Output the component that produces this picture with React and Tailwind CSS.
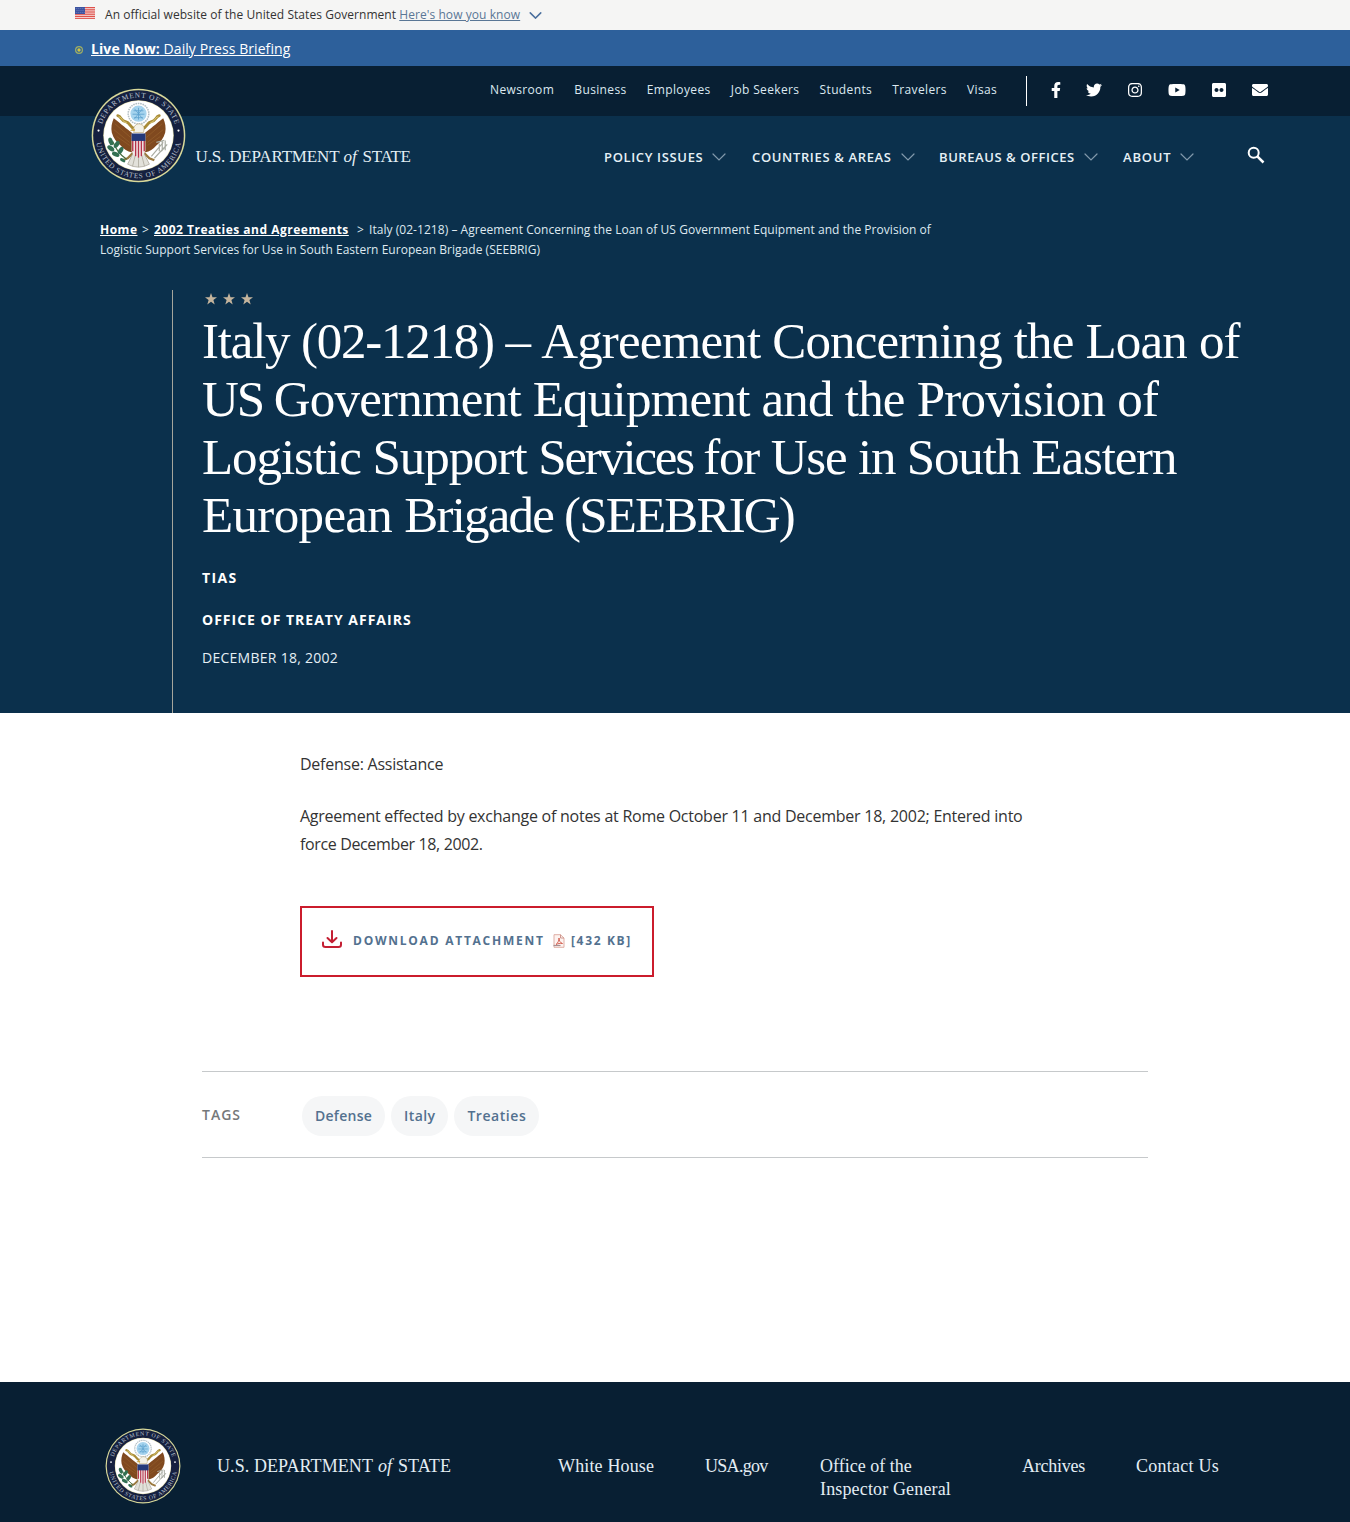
import React, { useId } from "react";
import { FaFacebookF, FaTwitter, FaInstagram, FaYoutube, FaFlickr, FaEnvelope } from "react-icons/fa";

const serif = "font-['Liberation_Serif',serif]";

function Seal({ className }) {
  const id = useId();
  return (
    <svg viewBox="0 0 96 96" className={className} aria-label="Department of State seal">
      <defs>
        <path id={id + "t"} d="M9.5 48a38.5 38.5 0 0 1 77 0" />
        <path id={id + "b"} d="M4.8 48a43.2 43.2 0 0 0 86.4 0" />
      </defs>
      <circle cx="48" cy="48" r="47.3" fill="#d9d99a" />
      <circle cx="48" cy="48" r="45.8" fill="#15203f" />
      <circle cx="48" cy="48" r="35.6" fill="#e5dfae" />
      <circle cx="48" cy="48" r="35" fill="#fff" />
      <g fill="#b9c1d0" fontFamily="Liberation Serif" fontWeight="400" fontSize="7.4">
        <text textAnchor="middle" textLength="98" lengthAdjust="spacing">
          <textPath href={"#" + id + "t"} startOffset="50%">DEPARTMENT OF STATE</textPath>
        </text>
        <text textAnchor="middle" textLength="120" lengthAdjust="spacing">
          <textPath href={"#" + id + "b"} startOffset="50%">UNITED STATES OF AMERICA</textPath>
        </text>
      </g>
      <circle cx="7.6" cy="43" r="1.1" fill="#fff" />
      <circle cx="88.4" cy="43" r="1.1" fill="#fff" />
      <circle cx="48" cy="26" r="10.4" fill="none" stroke="#b4bfc4" strokeWidth="1.6" strokeDasharray="1.6 .8" />
      <circle cx="48" cy="26" r="8.2" fill="#a6d4ee" />
      <path d="M43 23h10M42 26.500h12M43.500 30h9M48 20v12M44 21l8 10M52 21l-8 10" stroke="#5aa0cd" strokeWidth=".8" />
      <path d="M41 45C37 42 30 36 23 30.500C21 35 20 40 21 45C22.500 51 26 55 30 58C33 62 37 64 41 65L44 58V48Z" fill="#80491f" />
      <path d="M55 45C59 42 66 36 73 30.500C75 35 76 40 75 45C73.500 51 70 55 66 58C63 62 59 64 55 65L52 58V48Z" fill="#80491f" />
      <path d="M24 36l16 14M23 42l16 13M26 49l13 9M72 36l-16 14M73 42l-16 13M70 49l-13 9" stroke="#95602c" strokeWidth=".7" />
      <path d="M27 28c4 1 3 5 8 6s4 6 9 7M69 28c-4 1-3 5-8 6s-4 6-9 7" fill="none" stroke="#a98c38" strokeWidth="2.8" strokeLinecap="round" />
      <path d="M28 29c4 1 3 5 8 6M68 29c-4 1-3 5-8 6" fill="none" stroke="#e3d27c" strokeWidth=".9" />
      <path d="M43 41c1-4 5-6 8-4 3 1 3 4 2 8H43l1-3-4 1z" fill="#f4f2e8" stroke="#a68a4c" strokeWidth=".5" />
      <path d="M40.500 43l3.500-2v2.500z" fill="#d5a42b" />
      <path d="M43 65l-6 6-5 2M53 65l6 6 5 2" stroke="#9c7a3f" strokeWidth="2.400" fill="none" />
      <path d="M43 65h10l6 12q-11 6-22 0z" fill="#e2e1da" stroke="#a39f93" strokeWidth=".7" />
      <path d="M45 67l-3 12M48 67v13M51 67l3 12" stroke="#a39f93" strokeWidth=".7" />
      <path d="M41 46h14v17q-1 5-7 8q-6-3-7-8z" fill="#f3ecec" />
      <path d="M42.200 52v12M45.100 52v17M48 52v18.500M50.900 52v17M53.800 52v12" stroke="#b5334a" strokeWidth="1.4" />
      <path d="M41 46h14v7.500H41z" fill="#24397a" />
      <path d="M36 72C30 68 25 62 22 54" stroke="#476b3c" fill="none" strokeWidth="1.2" />
      <g fill="#337052">
        <ellipse cx="20" cy="54" rx="2.200" ry="4" transform="rotate(-20 20 54)" />
        <ellipse cx="26" cy="57" rx="2.200" ry="4" transform="rotate(35 26 57)" />
        <ellipse cx="20" cy="61" rx="2.200" ry="4" transform="rotate(-55 20 61)" />
        <ellipse cx="30" cy="63" rx="2.200" ry="4" transform="rotate(30 30 63)" />
        <ellipse cx="25" cy="67" rx="2.200" ry="4" transform="rotate(-65 25 67)" />
        <ellipse cx="32" cy="73" rx="1.600" ry="3" transform="rotate(-60 32 73)" />
      </g>
      <path d="M61 69l12-14M64 71l12-13M66 55l8-2M71 64l6-7M75 53v10M72 54v9M69 56v8" stroke="#a9aca3" strokeWidth="1.2" fill="none" />
    </svg>
  );
}

function Flag() {
  return (
    <svg viewBox="0 0 20 12" className="h-3 w-5 shrink-0">
      <path fill="#f7dfdc" d="M0 0h20v12H0z" />
      <path stroke="#dc4a43" strokeWidth=".95" d="M0 .5h20M0 2.300h20M0 4.100h20M0 5.900h20M0 7.700h20M0 9.500h20M0 11.400h20" />
      <path fill="#3c53a0" d="M0 0h10v7H0z" />
      <path stroke="#8b9bce" strokeWidth=".7" strokeDasharray=".8 1.200" d="M.8 1.500h9M1.600 3.500h8M.8 5.500h9" />
    </svg>
  );
}

function Chevron({ className, width = 1.2 }) {
  return (
    <svg viewBox="0 0 14 8" fill="none" stroke="currentColor" strokeWidth={width} strokeLinecap="round" className={className}>
      <path d="M1 1l6 6 6-6" />
    </svg>
  );
}

const utility = ["Newsroom", "Business", "Employees", "Job Seekers", "Students", "Travelers", "Visas"];
const menus = [
  ["POLICY ISSUES", "w-[148px]"],
  ["COUNTRIES & AREAS", "w-[187px]"],
  ["BUREAUS & OFFICES", "w-[184px] tracking-[0.56px]"],
  ["ABOUT", "w-[72px] tracking-[0.8px]"],
];
const headline = [
  [["Italy (02-1218) – ", "tracking-[-1.22px]"], ["Agreement Concerning the Loan of", "tracking-[-0.83px]"]],
  [["US ", "tracking-[-2.1px]"], ["Government Equipment and the Provision of", "tracking-[-0.78px]"]],
  [["Logistic Support ", "tracking-[-1.05px]"], ["Services ", "tracking-[-2.3px]"], ["for Use in South Eastern", "tracking-[-1.18px]"]],
  [["European ", "tracking-[-0.65px]"], ["Brigade ", "tracking-[-1.8px]"], ["(SEEBRIG)", "tracking-[-1.85px]"]],
];

function Social() {
  return (
    <div className="flex items-center text-white">
      <span className="flex w-[29px] justify-center"><FaFacebookF className="size-4" /></span>
      <span className="flex w-12 justify-center"><FaTwitter className="size-4" /></span>
      <span className="flex w-[34px] justify-center"><FaInstagram className="size-4" /></span>
      <span className="flex w-[50px] justify-center"><FaYoutube className="h-4 w-[18px]" /></span>
      <span className="flex w-[34px] justify-center"><FaFlickr className="size-4" /></span>
      <span className="flex w-12 justify-center"><FaEnvelope className="size-4" /></span>
    </div>
  );
}

function Header() {
  return (
    <header className="bg-[#0b304c]">
      <div className="flex h-[50px] items-start bg-[#081f33] pl-[490px]">
        <nav className="flex gap-[20.200px] pt-[14px] text-xs leading-5 tracking-[0.36px] text-[#dce8f0]">
          {utility.map((t) => <a key={t}>{t}</a>)}
        </nav>
        <div className="mt-2.5 mr-[14px] ml-[29.300px] h-[30px] w-px bg-white" />
        <div className="pt-4"><Social /></div>
      </div>
      <div className="flex h-[104px] items-start">
        <Seal className="-mt-[28.500px] ml-[90.500px] size-[95px] shrink-0" />
        <div className={`${serif} mt-[29px] ml-[10px] flex w-[408px] text-[17px] leading-6 whitespace-nowrap text-[#e3eff5]`}>
          <span className="w-[148px] tracking-[-0.15px]">U.S. DEPARTMENT</span>
          <i className="w-[19px]">of</i>
          <span className="tracking-[-0.3px]">STATE</span>
        </div>
        <nav className="mt-[31px] ml-[0.500px] flex text-[13px] leading-5 font-semibold tracking-[0.65px] text-[#e6f0f6]">
          {menus.map(([t, w]) => (
            <a key={t} className={`flex shrink-0 items-center gap-[9px] whitespace-nowrap ${w}`}>
              {t}
              <Chevron className="h-2 w-[14px] shrink-0 text-[#8299ab]" />
            </a>
          ))}
        </nav>
        <svg viewBox="0 0 18 18" className="mt-[30px] ml-[51.500px] size-[18px] shrink-0" fill="none" stroke="#fff" strokeWidth="2">
          <circle cx="6.700" cy="6.700" r="5" />
          <path d="M10.300 10.300l6.200 6.200" strokeWidth="2.500" />
        </svg>
      </div>
      <div className="ml-[100px] w-[850px] text-xs leading-5 text-[#dfe9f0]">
        <div className="flex tracking-[0.045px] whitespace-nowrap">
          <b className="w-[42px] tracking-[0.5px] text-white"><u>Home</u></b>
          <span className="w-3">&gt;</span>
          <b className="w-[203px] tracking-[0.5px] text-white"><u>2002 Treaties and Agreements</u></b>
          <span className="w-3">&gt;</span>
          <span>Italy (02-1218) – Agreement Concerning the Loan of US Government Equipment and the Provision of</span>
        </div>
        <div className="tracking-[0.03px]">Logistic Support Services for Use in South Eastern European Brigade (SEEBRIG)</div>
      </div>
      <div className="mt-[30px] ml-[172px] h-[423px] border-l border-[#a5a59c] pl-[29px] text-white">
        <div className="flex gap-[6px] pt-[3px] pl-[3px]">
          {[0, 1, 2].map((i) => (
            <svg key={i} viewBox="0 0 12 12" className="size-3" fill="#c4b49d">
              <path d="M6 0l1.500 4.300H12L8.400 7l1.300 4.500L6 8.800l-3.700 2.700L3.600 7 0 4.300h4.500z" />
            </svg>
          ))}
        </div>
        <h1 className={`${serif} mt-[7px] text-[51px] leading-[58px] whitespace-nowrap`}>
          {headline.map((parts, i) => (
            <span key={i} className="block">
              {parts.map(([t, k]) => <span key={t} className={k}>{t}</span>)}
            </span>
          ))}
        </h1>
        <p className="mt-6 text-sm font-bold tracking-[1.4px]">TIAS</p>
        <p className="mt-[22px] text-sm font-bold tracking-[1px]">OFFICE OF TREATY AFFAIRS</p>
        <p className="mt-[18px] text-sm tracking-[0.27px] text-[#e6eff5]">DECEMBER 18, 2002</p>
      </div>
    </header>
  );
}

function PdfIcon() {
  return (
    <svg viewBox="0 0 12 14" className="h-[14px] w-3" fill="none" strokeWidth=".9">
      <path d="M1 .7h6.500L11 4v9.300H1z" stroke="#dba79d" fill="#fdf3f0" />
      <path d="M7.500.7V4H11" stroke="#c98e86" />
      <path d="M3 10.500c2-1.500 3-4 3-6.500 0 3 1.500 5 3.500 5.500-2.500-.3-4.500 0-6.500 1z" stroke="#cf5647" />
      <path d="M.5 11.500h7" stroke="#a58f92" strokeWidth="1.200" />
    </svg>
  );
}

export default function App() {
  return (
    <div className="min-h-[1522px] bg-white font-['Open_Sans',sans-serif]">
      <div className="flex h-[30px] items-start bg-[#f5f5f4] pl-[75px] text-xs text-[#333]">
        <div className="pt-[7px]"><Flag /></div>
        <div className="ml-2.5 pt-[5px] leading-5 tracking-[0.05px] whitespace-nowrap">
          An official website of the United States Government{" "}
          <a className="tracking-[0.07px] text-[#5a7796] underline">Here's how you know</a>
        </div>
        <Chevron width={1.7} className="mt-3 ml-[9px] h-[7px] w-[13px] text-[#4a6f9d]" />
      </div>
      <div className="flex h-9 items-center bg-[#2d609b] pt-[2px] pl-[75px] text-sm text-white">
        <svg viewBox="0 0 8 8" className="mt-0.5 mr-2 size-2">
          <circle cx="4" cy="4" r="3.400" fill="none" stroke="#9fae63" strokeWidth="1.200" />
          <circle cx="4" cy="4" r="1.700" fill="#cfc545" />
        </svg>
        <a className="tracking-[0.08px] underline"><b>Live Now:</b> Daily Press Briefing</a>
      </div>
      <Header />
      <main className="h-[669px] pt-[37px]">
        <div className="ml-[300px] w-[750px] text-base leading-7 tracking-[-0.245px] text-[#333]">
          <p>Defense: Assistance</p>
          <p className="mt-6">Agreement effected by exchange of notes at Rome October 11 and December 18, 2002; Entered into <span className="tracking-[-0.36px]">force December 18, 2002.</span></p>
        </div>
        <a className="mt-12 ml-[300px] flex h-[71px] w-[354px] items-center border-2 border-[#cb1c2c] pb-[2px] pl-5 text-xs font-bold whitespace-nowrap text-[#53718f]">
          <svg viewBox="0 0 20 18" className="-mt-1 h-[18px] w-5" fill="none" stroke="#c41f33" strokeWidth="2" strokeLinecap="round" strokeLinejoin="round">
            <path d="M10 1v11M5.500 8L10 12.300 14.500 8M1 12.500v2.200Q1 17 3.500 17h13Q19 17 19 14.700v-2.200" />
          </svg>
          <span className="ml-[11px] w-[200px] tracking-[1.75px]">DOWNLOAD ATTACHMENT</span>
          <PdfIcon />
          <span className="ml-[6px] tracking-[1.65px]">[432 KB]</span>
        </a>
        <div className="mt-[94px] ml-[202px] flex h-[87px] w-[946px] items-center border-y border-[#c6c9cb] text-sm font-semibold">
          <span className="w-[100px] tracking-[1px] text-[#75787a]">TAGS</span>
          <div className="flex gap-[6px] pt-0.5 text-[#53718f]">
            <a className="flex h-10 items-center rounded-[20px] bg-[#f5f6f7] px-[13px] tracking-[0.26px]">Defense</a>
            <a className="flex h-10 items-center rounded-[20px] bg-[#f5f6f7] px-[13px] tracking-[0.4px]">Italy</a>
            <a className="flex h-10 items-center rounded-[20px] bg-[#f5f6f7] px-[13px] tracking-[0.55px]">Treaties</a>
          </div>
        </div>
      </main>
      <footer className={`${serif} flex h-[140px] items-start bg-[#081f33] pl-[105px] text-lg whitespace-nowrap text-[#e3edf3]`}>
        <Seal className="mt-[45.500px] -ml-[0.500px] size-[76px] shrink-0" />
        <div className="mt-[73px] ml-[36.500px] flex w-[341px] leading-[23px]">
          <span className="w-[161px] tracking-[0.08px]">U.S. DEPARTMENT</span>
          <i className="w-5">of</i>
          <span className="tracking-[0.1px]">STATE</span>
        </div>
        <nav className="mt-[73px] flex leading-[23px]">
          <a className="w-[147px] tracking-[0.15px]">White House</a>
          <a className="w-[115px] tracking-[-0.7px]">USA.gov</a>
          <a className="w-[202px]">Office of the<br /><span className="tracking-[0.15px]">Inspector General</span></a>
          <a className="w-[114px] tracking-[-0.25px]">Archives</a>
          <a className="tracking-[0.25px]">Contact Us</a>
        </nav>
      </footer>
    </div>
  );
}
